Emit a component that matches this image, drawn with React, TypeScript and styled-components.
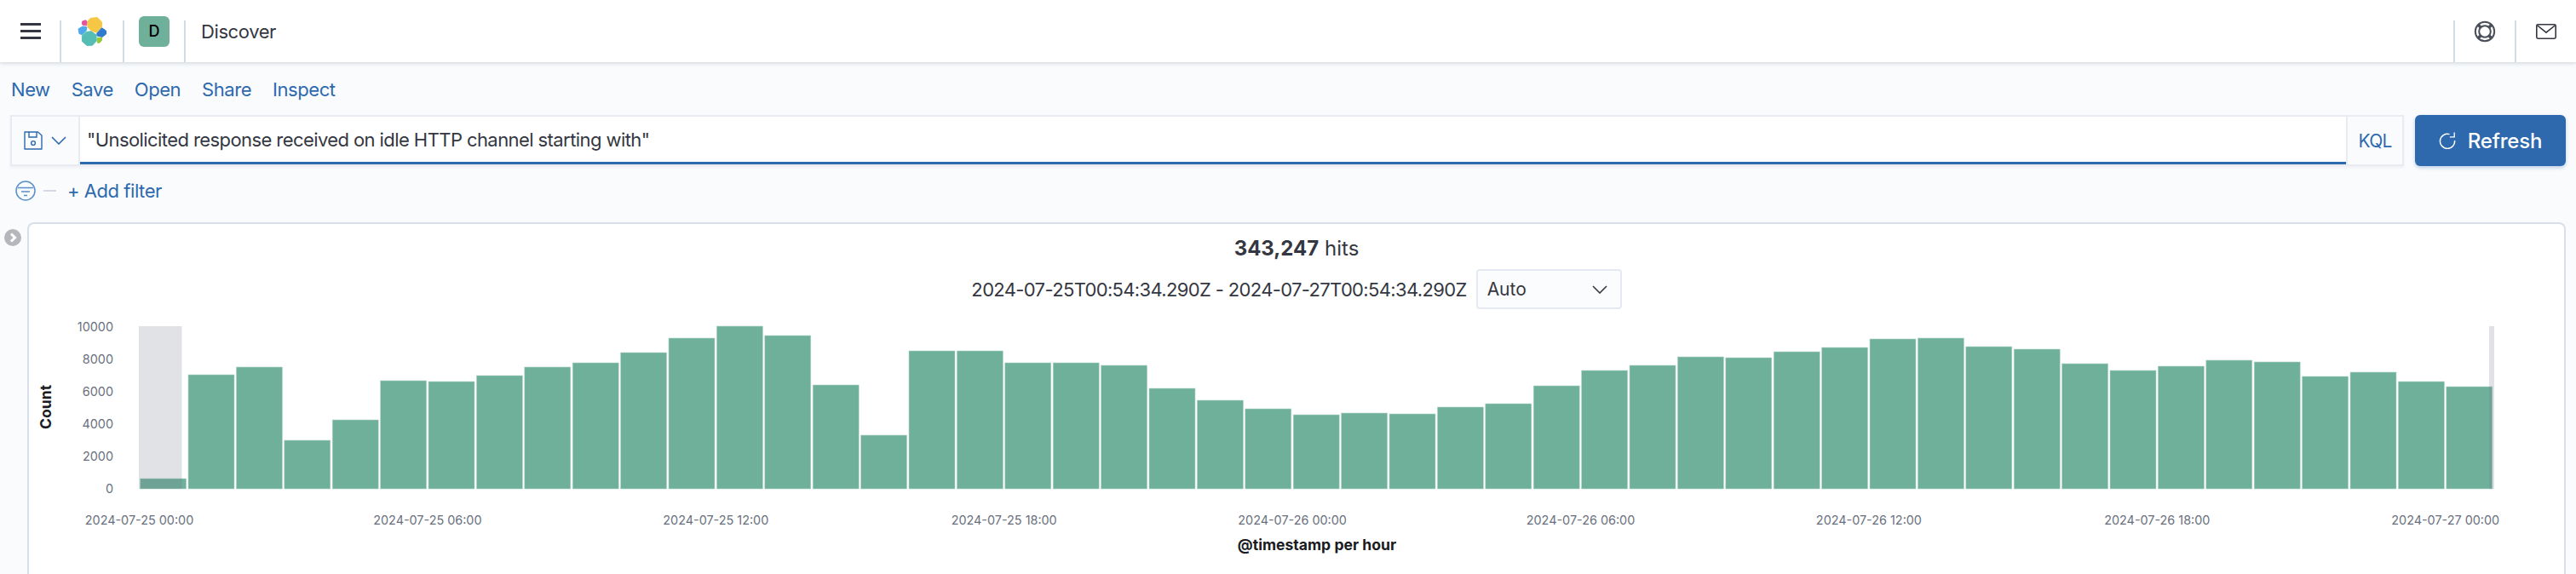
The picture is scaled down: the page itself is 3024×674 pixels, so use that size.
import styled, { createGlobalStyle } from "styled-components";

const GlobalStyle = createGlobalStyle`
  html, body {
    margin: 0;
    padding: 0;
    background: #fafbfd;
  }
  body {
    font-family: Inter, "Liberation Sans", sans-serif;
    color: #343741;
    -webkit-font-smoothing: antialiased;
  }
`;

const Page = styled.div`
  display: flex;
  flex-direction: column;
  width: 3024px;
  height: 674px;
  overflow: hidden;
`;

const Header = styled.header`
  display: flex;
  align-items: center;
  flex: none;
  height: 73px;
  background: #fff;
  box-shadow: 0 2px 4px rgba(152, 162, 179, 0.35);
`;
const Slot = styled.div<{ $w: number }>`
  display: flex;
  align-items: center;
  justify-content: center;
  flex: none;
  width: ${(p) => p.$w}px;
`;
const Sep = styled.div`
  flex: none;
  align-self: flex-end;
  width: 2px;
  height: 49px;
  background: #d3dae6;
`;
const AppTitle = styled.div`
  margin-left: 18px;
  font-size: 22px;
  line-height: 30px;
  letter-spacing: -0.4px;
`;
const Spacer = styled.div`
  flex: 1;
`;
const Burger = styled.div`
  display: flex;
  flex-direction: column;
  gap: 5px;
  width: 24px;
  margin-left: 2px;
  span {
    display: block;
    height: 3px;
    background: #343741;
  }
`;
const SpaceAvatar = styled.div`
  display: flex;
  align-items: center;
  justify-content: center;
  width: 36px;
  height: 36px;
  border-radius: 6px;
  background: #6eb09a;
  color: #000;
  font-size: 18px;
  font-weight: 500;
`;

const Menu = styled.nav`
  display: flex;
  align-items: center;
  flex: none;
  gap: 25px;
  height: 62px;
  padding-left: 13px;
  padding-top: 2px;
  box-sizing: border-box;
`;
const MenuLink = styled.a`
  color: #2d69ae;
  font-size: 22px;
  line-height: 30px;
  letter-spacing: -0.45px;
`;

const QueryRow = styled.div`
  display: flex;
  flex: none;
  gap: 13px;
  height: 60px;
  margin: 0 12px;
`;
const QueryBar = styled.div`
  display: flex;
  flex: 1;
  box-sizing: border-box;
  border: 2px solid #e8ebf2;
  box-shadow: 0 2px 3px rgba(152, 162, 179, 0.12);
`;
const Prepend = styled.div`
  display: flex;
  align-items: center;
  flex: none;
  gap: 10px;
  width: 80px;
  padding-left: 14px;
  box-sizing: border-box;
  border-right: 2px solid #e8ebf2;
`;
const QueryInput = styled.div`
  display: flex;
  align-items: center;
  flex: 1;
  padding-left: 8px;
  background: #fff;
  border-bottom: 3px solid #2d69ae;
  font-size: 22px;
  letter-spacing: -0.58px;
`;
const Kql = styled.div`
  display: flex;
  align-items: center;
  justify-content: center;
  flex: none;
  width: 64px;
  border-left: 2px solid #e8ebf2;
  color: #2d69ae;
  font-size: 21px;
  letter-spacing: -0.8px;
`;
const RefreshButton = styled.button`
  display: flex;
  align-items: center;
  justify-content: center;
  flex: none;
  gap: 14px;
  width: 177px;
  border: 0;
  border-radius: 6px;
  background: #2e69ae;
  color: #fff;
  font-family: inherit;
  font-size: 24px;
  font-weight: 500;
  letter-spacing: -0.2px;
  box-shadow: 0 2px 4px rgba(46, 105, 174, 0.3);
`;

const FilterRow = styled.div`
  display: flex;
  align-items: center;
  flex: none;
  height: 24px;
  padding: 17px 0 25px 18px;
`;
const Dash = styled.div`
  width: 15px;
  height: 2px;
  margin: 0 13px 0 9px;
  background: #d3dae6;
`;
const AddFilter = styled.a`
  color: #2d69ae;
  font-size: 22px;
  letter-spacing: -0.45px;
`;

const Body = styled.div`
  display: flex;
  flex: 1;
  min-height: 0;
  padding-right: 12px;
`;
const Rail = styled.div`
  flex: none;
  width: 27px;
  padding: 8px 0 0 5px;
`;
const Panel = styled.section`
  display: flex;
  flex-direction: column;
  align-items: center;
  flex: 1;
  padding-top: 12px;
  background: #fff;
  border: 2px solid #d9dfea;
  border-bottom: 0;
  border-radius: 8px 8px 0 0;
`;
const Hits = styled.div`
  font-size: 24px;
  line-height: 34px;
  strong {
    font-weight: 700;
  }
`;
const RangeRow = styled.div`
  display: flex;
  align-items: center;
  gap: 11px;
  margin-top: 7px;
  font-size: 22px;
  letter-spacing: -0.65px;
`;
const Interval = styled.div`
  display: flex;
  align-items: center;
  justify-content: space-between;
  width: 171px;
  height: 47px;
  padding: 0 15px 0 11px;
  box-sizing: border-box;
  background: #fbfcfd;
  border: 2px solid #e6e9f2;
  border-radius: 4px;
  font-size: 21px;
  letter-spacing: 0;
`;
const Chart = styled.svg`
  display: block;
  flex: none;
  margin-top: 7px;
  font-family: Inter, "Liberation Sans", sans-serif;
`;
const Tick = styled.text`
  fill: #69707d;
  font-size: 14.4px;
  dominant-baseline: central;
`;
const AxisTitle = styled.text`
  fill: #1a1c21;
  font-size: 17.6px;
  font-weight: 700;
  text-anchor: middle;
  dominant-baseline: central;
`;

// bar heights in px, read off the histogram (190px = 10000 hits)
const BARS = [
  12, 134, 143, 57, 81, 127, 126, 133, 143, 148, 160, 177, 191, 180, 122, 63, 162, 162, 148, 148, 145, 118, 104, 94,
  87, 89, 88, 96, 100, 121, 139, 145, 155, 154, 161, 166, 176, 177, 167, 164, 147, 139, 144, 151, 149, 132, 137, 126,
  120,
];
const TICKS = ["07-25 00:00", "07-25 06:00", "07-25 12:00", "07-25 18:00", "07-26 00:00", "07-26 06:00", "07-26 12:00", "07-26 18:00", "07-27 00:00"];
const COUNTS = [10000, 8000, 6000, 4000, 2000, 0];
const BASE = 574;

function Logo() {
  return (
    <svg width="36" height="36" viewBox="90 18 36 36">
      <path d="M106 20.5 L114 19.5 L119.7 25 L119.2 31 L113.5 37.2 L108 35.5 L103 31 L103 24 Z" fill="#f6c744" stroke="#f6c744" strokeLinejoin="round" />
      <path d="M101 36.5 L107 35.8 L113 40 L113.2 47 L108.5 52.2 L102 52.4 L96.5 47.5 L96.3 41 Z" fill="#56bdb4" stroke="#56bdb4" strokeLinejoin="round" />
      <path d="M92 33 L97 30 L102 31 L101.5 34.5 L96.5 39.8 L93 38.5 Z" fill="#4fa8ec" stroke="#4fa8ec" strokeLinejoin="round" />
      <path d="M96.7 24 L100.5 22.8 L102 24 L101.6 29 L98 28.6 L96.4 27.5 Z" fill="#e2559b" stroke="#e2559b" strokeLinejoin="round" />
      <path d="M119.5 31.8 L124.4 35 L124.6 39 L120 42.4 L114 41 L113.8 38 Z" fill="#2f7bcd" stroke="#2f7bcd" strokeLinejoin="round" />
      <path d="M114.2 43.5 L119.6 43 L119.4 46.5 L116.5 49.4 L114.3 49 Z" fill="#95c93d" stroke="#95c93d" strokeLinejoin="round" />
    </svg>
  );
}

function SupportIcon() {
  return (
    <svg width="26" height="26" viewBox="0 0 26 26" fill="none" stroke="#4a4e58" strokeWidth="2">
      <circle cx="13" cy="13" r="11.2" />
      <circle cx="13" cy="13" r="6.8" />
      <path d="M8.2 8.2 L5 5 M17.8 8.2 L21 5 M8.2 17.8 L5 21 M17.8 17.8 L21 21" strokeWidth="3.4" />
    </svg>
  );
}

function MailIcon() {
  return (
    <svg width="24" height="18" viewBox="0 0 24 18" fill="none" stroke="#343741" strokeWidth="1.6">
      <rect x="0.8" y="0.8" width="22.4" height="16.4" rx="1.6" />
      <path d="M1.2 1.5 L12 10.2 L22.8 1.5" />
    </svg>
  );
}

function SaveIcon() {
  return (
    <svg width="22" height="22" viewBox="0 0 22 22" fill="none" stroke="#2d69ae" strokeWidth="1.4">
      <path d="M1 1 H16.5 L21 5 V21 H1 Z" strokeLinejoin="round" />
      <path d="M6 1 V7 H15 V1" />
      <circle cx="11" cy="14" r="2.4" />
    </svg>
  );
}

function Chevron({ color = "#2d69ae", width = 18, height = 10 }: { color?: string; width?: number; height?: number }) {
  return (
    <svg width={width} height={height} viewBox="0 0 18 10" fill="none" stroke={color} strokeWidth="1.6">
      <path d="M1 1 L9 9 L17 1" />
    </svg>
  );
}

function RefreshIcon() {
  return (
    <svg width="20" height="20" viewBox="0 0 20 20" fill="none" stroke="#fff" strokeWidth="1.5">
      <path d="M12.5 2.6 A8.6 8.6 0 1 0 18.6 10" />
      <path d="M18.2 0.5 V5.8 H12.8" strokeWidth="1.3" />
    </svg>
  );
}

function FilterIcon() {
  return (
    <svg width="24" height="24" viewBox="0 0 24 24" fill="none" stroke="#5a8fc9" strokeWidth="1.5">
      <circle cx="12" cy="12" r="11" />
      <path d="M3 8.5 H21 M7 13 H17 M10 17.5 H14" />
    </svg>
  );
}

function CollapseIcon() {
  return (
    <svg width="20" height="20" viewBox="0 0 20 20" display="block">
      <circle cx="10" cy="10" r="10" fill="#b5b7bc" />
      <path d="M8 5.5 L12.5 10 L8 14.5" fill="none" stroke="#fff" strokeWidth="3" />
    </svg>
  );
}

export default function App() {
  return (
    <Page>
      <GlobalStyle />
      <Header>
        <Slot $w={70}>
          <Burger>
            <span />
            <span />
            <span />
          </Burger>
        </Slot>
        <Sep />
        <Slot $w={72}>
          <Logo />
        </Slot>
        <Sep />
        <Slot $w={70}>
          <SpaceAvatar>D</SpaceAvatar>
        </Slot>
        <Sep />
        <AppTitle>Discover</AppTitle>
        <Spacer />
        <Sep />
        <Slot $w={70}>
          <SupportIcon />
        </Slot>
        <Sep />
        <Slot $w={70}>
          <MailIcon />
        </Slot>
      </Header>

      <Menu>
        <MenuLink>New</MenuLink>
        <MenuLink>Save</MenuLink>
        <MenuLink>Open</MenuLink>
        <MenuLink>Share</MenuLink>
        <MenuLink>Inspect</MenuLink>
      </Menu>

      <QueryRow>
        <QueryBar>
          <Prepend>
            <SaveIcon />
            <Chevron />
          </Prepend>
          <QueryInput>"Unsolicited response received on idle HTTP channel starting with"</QueryInput>
          <Kql>KQL</Kql>
        </QueryBar>
        <RefreshButton>
          <RefreshIcon />
          Refresh
        </RefreshButton>
      </QueryRow>

      <FilterRow>
        <FilterIcon />
        <Dash />
        <AddFilter>+ Add filter</AddFilter>
      </FilterRow>

      <Body>
        <Rail>
          <CollapseIcon />
        </Rail>
        <Panel>
          <Hits>
            <strong>343,247</strong> hits
          </Hits>
          <RangeRow>
            2024-07-25T00:54:34.290Z - 2024-07-27T00:54:34.290Z
            <Interval>
              Auto
              <Chevron color="#343741" />
            </Interval>
          </RangeRow>
          <Chart width="2976" height="304" viewBox="34 370 2976 304">
            {COUNTS.map((c, i) => (
              <Tick key={c} x="133" y={383.5 + i * 38} textAnchor="end">
                {c}
              </Tick>
            ))}
            <AxisTitle transform="translate(53 478) rotate(-90)">Count</AxisTitle>
            {BARS.map((h, i) => (
              <rect key={i} x={164.6 + i * 56.4} y={BASE - h} width="54" height={h} fill="#6fb09a" stroke="#b5d6ca" strokeWidth="0.6" />
            ))}
            <rect x="163" y="383" width="50.5" height="191" fill="#69707d" fillOpacity="0.2" />
            <rect x="2922" y="383" width="6" height="191" fill="#69707d" fillOpacity="0.2" />
            {TICKS.map((t, i) => (
              <Tick key={t} x={163.5 + i * 338.4} y="610" textAnchor="middle">
                {"2024-" + t}
              </Tick>
            ))}
            <AxisTitle x="1546" y="639">
              @timestamp per hour
            </AxisTitle>
          </Chart>
        </Panel>
      </Body>
    </Page>
  );
}
